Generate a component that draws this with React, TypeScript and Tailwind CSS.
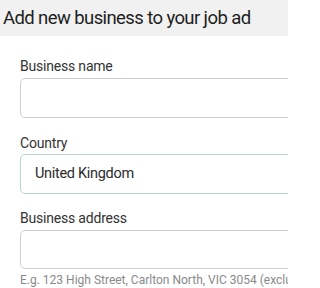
export default function App() {
  return (
    <div className="w-[288px] h-[288px] overflow-hidden bg-white font-['Roboto',sans-serif] text-[#2b2b2b]">
      <div className="h-[36px] bg-[#f1f1f1] pl-[3px] flex items-center">
        <h1 className="text-[18.5px] leading-none tracking-[-0.6px] whitespace-nowrap text-[#1e1e1e]">
          Add new business to your job ad
        </h1>
      </div>
      <div className="pl-[20px] pt-[20px] flex flex-col w-[340px]">
        <label className="text-[14px] leading-[20px] tracking-[-0.2px] text-[#333]">Business name</label>
        <div className="mt-[2px] h-[40px] rounded-[5px] border border-[#cfcfcf]" />
        <label className="mt-[15px] text-[14px] leading-[20px] tracking-[-0.2px] text-[#333]">Country</label>
        <div className="mt-[1px] h-[40px] rounded-[5px] border border-[#b9d9c6] flex items-center pl-[14px]">
          <span className="text-[14.5px] tracking-[-0.3px] text-[#2b2b2b]">United Kingdom</span>
        </div>
        <label className="mt-[14px] text-[14px] leading-[20px] tracking-[-0.2px] text-[#333]">Business address</label>
        <div className="mt-[2px] h-[39px] rounded-[5px] border border-[#cfcfcf]" />
        <p className="mt-[3px] text-[12px] leading-[16px] whitespace-nowrap text-[#8a8a8a]">
          E.g. 123 High Street, Carlton North, VIC 3054 (excluding unit numbers)
        </p>
      </div>
    </div>
  )
}
